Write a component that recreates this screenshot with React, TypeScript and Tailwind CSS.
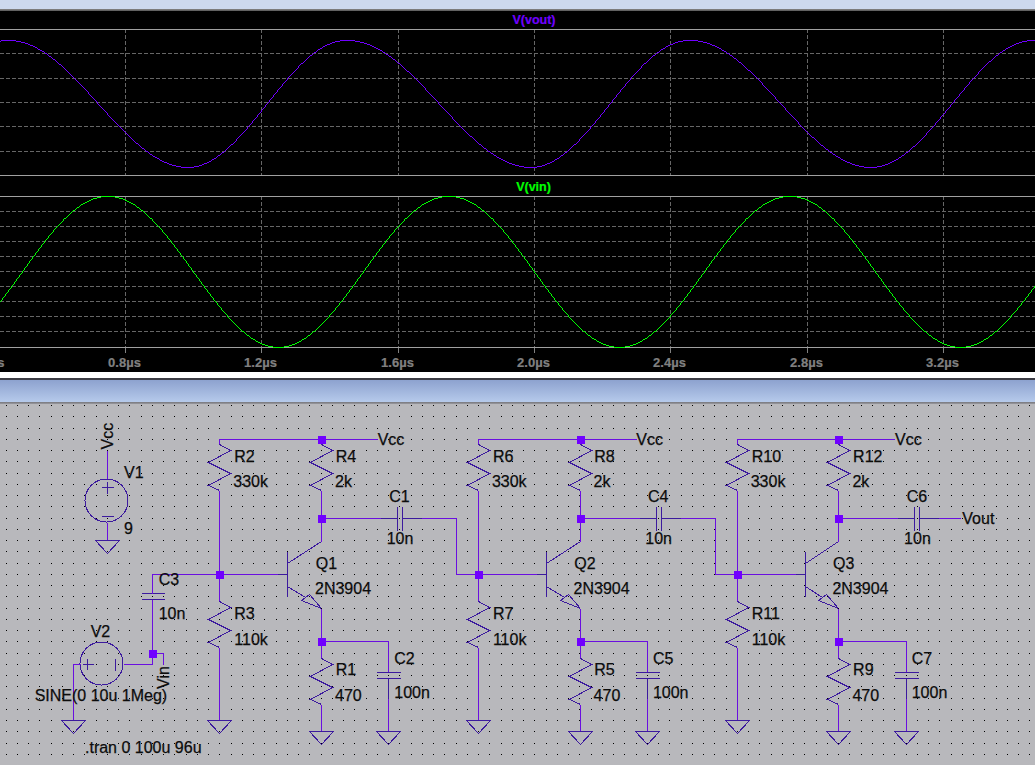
import React from "react";

const WIRE = "#6a0fe0";
const PART = "#3c1a9e";
const font = "'Liberation Sans', Arial, sans-serif";

const gridX = [125, 261, 398, 534, 670, 807, 943];
const axisLabels = ["0.8µs", "1.2µs", "1.6µs", "2.0µs", "2.4µs", "2.8µs", "3.2µs"];
const voutGrid = [53, 78, 102, 126, 151];
const vinGrid = [211, 226, 241, 256, 271, 286, 301, 316, 331];

const voutExtrema: [number, number][] = [
  [-159, 167], [8, 40], [188, 167], [347, 40], [531, 167], [690, 40], [871, 167], [1034, 40], [1215, 167],
];

function voutPoints() {
  const pts: string[] = [];
  for (let x = 0; x <= 1035; x++) {
    let i = 0;
    while (i < voutExtrema.length - 2 && x > voutExtrema[i + 1][0]) i++;
    const [x0, y0] = voutExtrema[i];
    const [x1, y1] = voutExtrema[i + 1];
    const t = (x - x0) / (x1 - x0);
    const y = y0 + ((y1 - y0) * (1 - Math.cos(Math.PI * t))) / 2;
    pts.push(`${x},${Math.round(y)}`);
  }
  return pts.join(" ");
}

function vinPoints() {
  const pts: string[] = [];
  for (let x = 0; x <= 1035; x++) {
    const y = 271.5 - 75.5 * Math.cos((2 * Math.PI * (x - 108)) / 341);
    pts.push(`${x},${Math.round(y)}`);
  }
  return pts.join(" ");
}

function P({ pts, color = WIRE }: { pts: number[]; color?: string }) {
  const s: string[] = [];
  for (let i = 0; i < pts.length; i += 2) s.push(`${pts[i] + 0.5},${pts[i + 1] + 0.5}`);
  return <polyline points={s.join(" ")} fill="none" stroke={color} strokeWidth={1} shapeRendering="crispEdges" />;
}

function Node({ x, y }: { x: number; y: number }) {
  return <rect x={x - 3} y={y - 3} width={8} height={8} fill="#7000ff" shapeRendering="crispEdges" />;
}

function Ground({ x, y }: { x: number; y: number }) {
  return <P color={PART} pts={[x, y, x - 12, y, x, y + 13, x + 12, y, x, y]} />;
}

function Res({ x, y }: { x: number; y: number }) {
  return <P color={PART} pts={[x, y, x + 11, y + 6, x - 11, y + 18, x + 11, y + 29, x - 11, y + 41, x, y + 46]} />;
}

function T({ x, y, children }: { x: number; y: number; children: React.ReactNode }) {
  return (
    <text x={x} y={y} fontSize={16} fill="#0c0c0c" stroke="#0c0c0c" strokeWidth={0.25} fontFamily={font}>
      {children}
    </text>
  );
}

const stages = [
  { l: 219, c: 321, bar: 287, cap: 388, pl: 400, end: 456, next: 478, d: 0, names: ["R2", "R4", "C1", "Q1", "R3", "R1", "C2"] },
  { l: 478, c: 580, bar: 546, cap: 647, pl: 659, end: 715, next: 737, d: 258.6, names: ["R6", "R8", "C4", "Q2", "R7", "R5", "C5"] },
  { l: 737, c: 838, bar: 805, cap: 906, pl: 917, end: 0, next: 0, d: 517.4, names: ["R10", "R12", "C6", "Q3", "R11", "R9", "C7"] },
];

function Stage({ s }: { s: (typeof stages)[number] }) {
  const { l, c, bar, cap, pl, end, next, d, names } = s;
  return (
    <g>
      <P pts={[l, 444, l, 439, c + 56, 439]} />
      <P pts={[c, 439, c, 444]} />
      <Res x={l} y={444} />
      <Res x={c} y={444} />
      <P pts={[l, 490, l, 601]} />
      <Res x={l} y={601} />
      <P pts={[l, 647, l, 720]} />
      <Ground x={l} y={720} />
      <P pts={[c, 490, c, 541]} />
      <P pts={[c, 518, pl - 20, 518]} />
      <P color={PART} pts={[pl - 20, 518, pl - 3, 518]} />
      <P color={PART} pts={[pl - 3, 506, pl - 3, 530]} />
      <P color={PART} pts={[pl + 2, 506, pl + 2, 530]} />
      <P color={PART} pts={[pl + 2, 518, pl + 21, 518]} />
      {end ? (
        <P pts={[pl + 21, 518, end, 518, end, 574, next, 574]} />
      ) : (
        <P pts={[pl + 21, 518, 960, 518]} />
      )}
      <P pts={[l, 574, bar - 10, 574]} />
      <P color={PART} pts={[bar - 10, 574, bar, 574]} />
      <P color={PART} pts={[bar, 551, bar, 596]} />
      <P color={PART} pts={[bar, 563, c, 541]} />
      <P color={PART} pts={[bar, 586, c - 16, 597]} />
      <P color={PART} pts={[c, 608, c - 20, 600, c - 12, 594, c, 608]} />
      <P pts={[c, 608, c, 658]} />
      <Res x={c} y={658} />
      <P pts={[c, 704, c, 731]} />
      <Ground x={c} y={731} />
      <P pts={[c, 641, cap, 641, cap, 672]} />
      <P color={PART} pts={[cap - 12, 672, cap + 12, 672]} />
      <P color={PART} pts={[cap - 12, 678, cap + 12, 678]} />
      <P color={PART} pts={[cap, 678, cap, 698]} />
      <P pts={[cap, 698, cap, 731]} />
      <Ground x={cap} y={731} />
      <Node x={c} y={439} />
      <Node x={c} y={518} />
      <Node x={l} y={574} />
      <Node x={c} y={641} />

      <T x={234.3 + d} y={462}>{names[0]}</T>
      <T x={233.3 + d} y={487}>330k</T>
      <T x={335.7 + d} y={462}>{names[1]}</T>
      <T x={335 + d} y={487}>2k</T>
      <T x={389.3 + d} y={502}>{names[2]}</T>
      <T x={386.7 + d} y={544}>10n</T>
      <T x={315.7 + d} y={569}>{names[3]}</T>
      <T x={315 + d} y={594}>2N3904</T>
      <T x={234.3 + d} y={619}>{names[4]}</T>
      <T x={234.3 + d} y={645}>110k</T>
      <T x={335.7 + d} y={675}>{names[5]}</T>
      <T x={335 + d} y={701}>470</T>
      <T x={394.3 + d} y={664}>{names[6]}</T>
      <T x={394.3 + d} y={698}>100n</T>
      <T x={377.7 + d} y={445}>Vcc</T>
    </g>
  );
}

function Plot() {
  const dash = { stroke: "#666", strokeDasharray: "4 2", shapeRendering: "crispEdges" as const };
  return (
    <svg className="block w-full h-full" viewBox="0 11 1035 361">
      <rect x={0} y={11} width={1035} height={361} fill="#000" />
      {voutGrid.concat(vinGrid).map((y) => (
        <line key={y} x1={0} x2={1035} y1={y + 0.5} y2={y + 0.5} {...dash} />
      ))}
      {gridX.map((x) => (
        <g key={x}>
          <line x1={x + 0.5} x2={x + 0.5} y1={29} y2={175} {...dash} />
          <line x1={x + 0.5} x2={x + 0.5} y1={196} y2={347} {...dash} />
          <line x1={x + 0.5} x2={x + 0.5} y1={347} y2={353} stroke="#808080" shapeRendering="crispEdges" />
        </g>
      ))}
      {[29, 175, 196, 347].map((y) => (
        <line key={y} x1={0} x2={1035} y1={y + 0.5} y2={y + 0.5} stroke="#a0a0a0" shapeRendering="crispEdges" />
      ))}
      <polyline points={voutPoints()} fill="none" stroke="#7000ff" strokeWidth={1} shapeRendering="crispEdges" />
      <polyline points={vinPoints()} fill="none" stroke="#00ff00" strokeWidth={1} shapeRendering="crispEdges" />
      <text x={534} y={24} textAnchor="middle" fontSize={12.5} fontWeight={700} fill="#7000ff" stroke="#7000ff" strokeWidth={0.2} fontFamily={font}>V(vout)</text>
      <text x={533.5} y={191} textAnchor="middle" fontSize={12.5} fontWeight={700} fill="#00ff00" stroke="#00ff00" strokeWidth={0.2} fontFamily={font}>V(vin)</text>
      {axisLabels.map((t, i) => (
        <text key={t} x={gridX[i] - 0.5} y={367} textAnchor="middle" fontSize={13} fontWeight={700} fill="#808080" stroke="#808080" strokeWidth={0.2} fontFamily={font}>{t}</text>
      ))}
      <text x={-12} y={367} textAnchor="middle" fontSize={13} fontWeight={700} fill="#808080" stroke="#808080" strokeWidth={0.2} fontFamily={font}>0.4µs</text>
    </svg>
  );
}

function Schematic() {
  const dots: React.ReactNode[] = [];
  for (let j = 0; j < 33; j++) {
    for (let i = 0; i < 92; i++) {
      const x = Math.floor(6.24 + 11.25 * i);
      const y = Math.round(405 + 11.25 * j);
      dots.push(<rect key={`${i}-${j}`} x={x} y={y} width={1} height={1} fill="#000" shapeRendering="crispEdges" />);
    }
  }
  return (
    <svg className="block w-full h-full" viewBox="0 404 1035 361">
      {dots}
      <P pts={[107, 450, 107, 478]} />
      <circle cx={106.5} cy={500.5} r={21.5} fill="none" stroke={PART} shapeRendering="crispEdges" />
      <P color={PART} pts={[101, 487, 113, 487]} />
      <P color={PART} pts={[107, 481, 107, 493]} />
      <P color={PART} pts={[101, 516, 113, 516]} />
      <P pts={[107, 522, 107, 540]} />
      <Ground x={107} y={540} />
      <circle cx={101.5} cy={663.5} r={21.5} fill="none" stroke={PART} shapeRendering="crispEdges" />
      <P color={PART} pts={[82, 664, 93, 664]} />
      <P color={PART} pts={[87, 658, 87, 669]} />
      <P color={PART} pts={[115, 658, 115, 670]} />
      <P pts={[123, 664, 152, 664, 152, 599]} />
      <P color={PART} pts={[141, 593, 164, 593]} />
      <P color={PART} pts={[141, 599, 164, 599]} />
      <P pts={[152, 593, 152, 574, 219, 574]} />
      <P pts={[152, 653, 163, 653, 163, 664]} />
      <P pts={[80, 664, 73, 664, 73, 720]} />
      <Ground x={73} y={720} />
      <Node x={152} y={653} />

      {stages.map((s) => (
        <Stage key={s.l} s={s} />
      ))}

      <T x={124} y={478}>V1</T>
      <T x={124} y={534}>9</T>
      <T x={90.7} y={637}>V2</T>
      <T x={158.7} y={585}>C3</T>
      <T x={158.7} y={619}>10n</T>
      <T x={34.7} y={701}>SINE(0 10u 1Meg)</T>
      <T x={85} y={753}>.tran 0 100u 96u</T>
      <T x={962.3} y={524}>Vout</T>
      <text transform="translate(112.5 449.5) rotate(-90)" fontSize={16} fill="#0c0c0c" stroke="#0c0c0c" strokeWidth={0.25} fontFamily={font}>Vcc</text>
      <text transform="translate(169 689) rotate(-90)" fontSize={16} fill="#0c0c0c" stroke="#0c0c0c" strokeWidth={0.25} fontFamily={font}>Vin</text>
    </svg>
  );
}

export default function App() {
  return (
    <div className="flex flex-col w-[1035px] h-[765px] overflow-hidden bg-[#b8b8bc]">
      <div className="h-[9px] shrink-0 bg-[#cdd9ee]" />
      <div className="h-[2px] shrink-0 bg-gradient-to-b from-[#8a8a8a] to-[#555555]" />
      <div className="h-[361px] shrink-0 bg-black">
        <Plot />
      </div>
      <div className="h-[6px] shrink-0 bg-white" />
      <div className="h-[2px] shrink-0 bg-[#3c3c44]" />
      <div className="h-[22px] shrink-0 bg-gradient-to-b from-[#8da2cf] to-[#b6caeb]" />
      <div className="h-[2px] shrink-0 bg-gradient-to-b from-[#77777c] to-[#9a9aa0]" />
      <div className="h-[361px] shrink-0">
        <Schematic />
      </div>
    </div>
  );
}
